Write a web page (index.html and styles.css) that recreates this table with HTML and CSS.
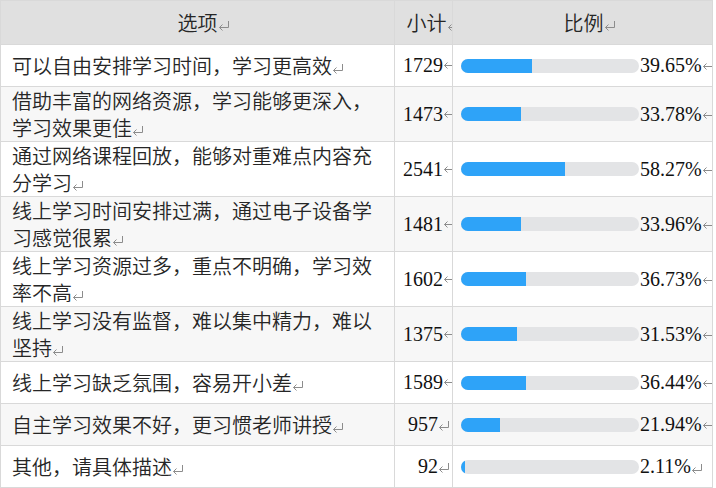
FILE: index.html
```html
<!DOCTYPE html>
<html lang="zh-CN">
<head>
<meta charset="utf-8">
<title>选项统计</title>
<link rel="stylesheet" href="styles.css">
</head>
<body>
<table class="survey">
  <colgroup><col class="c-opt"><col class="c-cnt"><col class="c-pct"></colgroup>
  <thead>
    <tr class="head">
      <th class="h-opt">选项<svg class="pm hang" viewBox="0 0 12 10"><path d="M10.5 0V6.5H1.5M4.5 3.5L1.5 6.5L4.5 9.5"/></svg></th>
      <th class="h-cnt">小计<svg class="pm hang" viewBox="0 0 12 10"><path d="M10.5 0V6.5H1.5M4.5 3.5L1.5 6.5L4.5 9.5"/></svg></th>
      <th class="h-pct">比例<svg class="pm hang" viewBox="0 0 12 10"><path d="M10.5 0V6.5H1.5M4.5 3.5L1.5 6.5L4.5 9.5"/></svg></th>
    </tr>
  </thead>
  <tbody>
    <tr class="row">
      <td class="opt">可以自由安排学习时间，学习更高效<svg class="pm" viewBox="0 0 12 10"><path d="M10.5 0V6.5H1.5M4.5 3.5L1.5 6.5L4.5 9.5"/></svg></td>
      <td class="cnt">1729<svg class="pm hi" viewBox="0 0 12 10"><path d="M10.5 0V6.5H1.5M4.5 3.5L1.5 6.5L4.5 9.5"/></svg></td>
      <td class="pct"><div class="pct-in"><div class="track"><div class="fill" style="width:39.65%"></div></div><span class="val">39.65%</span><svg class="pm hi" viewBox="0 0 12 10"><path d="M10.5 0V6.5H1.5M4.5 3.5L1.5 6.5L4.5 9.5"/></svg></div></td>
    </tr>
    <tr class="row alt">
      <td class="opt">借助丰富的网络资源，学习能够更深入，学习效果更佳<svg class="pm" viewBox="0 0 12 10"><path d="M10.5 0V6.5H1.5M4.5 3.5L1.5 6.5L4.5 9.5"/></svg></td>
      <td class="cnt">1473<svg class="pm hi" viewBox="0 0 12 10"><path d="M10.5 0V6.5H1.5M4.5 3.5L1.5 6.5L4.5 9.5"/></svg></td>
      <td class="pct"><div class="pct-in"><div class="track"><div class="fill" style="width:33.78%"></div></div><span class="val">33.78%</span><svg class="pm hi" viewBox="0 0 12 10"><path d="M10.5 0V6.5H1.5M4.5 3.5L1.5 6.5L4.5 9.5"/></svg></div></td>
    </tr>
    <tr class="row">
      <td class="opt">通过网络课程回放，能够对重难点内容充分学习<svg class="pm" viewBox="0 0 12 10"><path d="M10.5 0V6.5H1.5M4.5 3.5L1.5 6.5L4.5 9.5"/></svg></td>
      <td class="cnt">2541<svg class="pm hi" viewBox="0 0 12 10"><path d="M10.5 0V6.5H1.5M4.5 3.5L1.5 6.5L4.5 9.5"/></svg></td>
      <td class="pct"><div class="pct-in"><div class="track"><div class="fill" style="width:58.27%"></div></div><span class="val">58.27%</span><svg class="pm hi" viewBox="0 0 12 10"><path d="M10.5 0V6.5H1.5M4.5 3.5L1.5 6.5L4.5 9.5"/></svg></div></td>
    </tr>
    <tr class="row alt">
      <td class="opt">线上学习时间安排过满，通过电子设备学习感觉很累<svg class="pm" viewBox="0 0 12 10"><path d="M10.5 0V6.5H1.5M4.5 3.5L1.5 6.5L4.5 9.5"/></svg></td>
      <td class="cnt">1481<svg class="pm hi" viewBox="0 0 12 10"><path d="M10.5 0V6.5H1.5M4.5 3.5L1.5 6.5L4.5 9.5"/></svg></td>
      <td class="pct"><div class="pct-in"><div class="track"><div class="fill" style="width:33.96%"></div></div><span class="val">33.96%</span><svg class="pm hi" viewBox="0 0 12 10"><path d="M10.5 0V6.5H1.5M4.5 3.5L1.5 6.5L4.5 9.5"/></svg></div></td>
    </tr>
    <tr class="row">
      <td class="opt">线上学习资源过多，重点不明确，学习效率不高<svg class="pm" viewBox="0 0 12 10"><path d="M10.5 0V6.5H1.5M4.5 3.5L1.5 6.5L4.5 9.5"/></svg></td>
      <td class="cnt">1602<svg class="pm hi" viewBox="0 0 12 10"><path d="M10.5 0V6.5H1.5M4.5 3.5L1.5 6.5L4.5 9.5"/></svg></td>
      <td class="pct"><div class="pct-in"><div class="track"><div class="fill" style="width:36.73%"></div></div><span class="val">36.73%</span><svg class="pm hi" viewBox="0 0 12 10"><path d="M10.5 0V6.5H1.5M4.5 3.5L1.5 6.5L4.5 9.5"/></svg></div></td>
    </tr>
    <tr class="row alt">
      <td class="opt">线上学习没有监督，难以集中精力，难以坚持<svg class="pm" viewBox="0 0 12 10"><path d="M10.5 0V6.5H1.5M4.5 3.5L1.5 6.5L4.5 9.5"/></svg></td>
      <td class="cnt">1375<svg class="pm hi" viewBox="0 0 12 10"><path d="M10.5 0V6.5H1.5M4.5 3.5L1.5 6.5L4.5 9.5"/></svg></td>
      <td class="pct"><div class="pct-in"><div class="track"><div class="fill" style="width:31.53%"></div></div><span class="val">31.53%</span><svg class="pm hi" viewBox="0 0 12 10"><path d="M10.5 0V6.5H1.5M4.5 3.5L1.5 6.5L4.5 9.5"/></svg></div></td>
    </tr>
    <tr class="row">
      <td class="opt">线上学习缺乏氛围，容易开小差<svg class="pm" viewBox="0 0 12 10"><path d="M10.5 0V6.5H1.5M4.5 3.5L1.5 6.5L4.5 9.5"/></svg></td>
      <td class="cnt">1589<svg class="pm hi" viewBox="0 0 12 10"><path d="M10.5 0V6.5H1.5M4.5 3.5L1.5 6.5L4.5 9.5"/></svg></td>
      <td class="pct"><div class="pct-in"><div class="track"><div class="fill" style="width:36.44%"></div></div><span class="val">36.44%</span><svg class="pm hi" viewBox="0 0 12 10"><path d="M10.5 0V6.5H1.5M4.5 3.5L1.5 6.5L4.5 9.5"/></svg></div></td>
    </tr>
    <tr class="row alt">
      <td class="opt">自主学习效果不好，更习惯老师讲授<svg class="pm" viewBox="0 0 12 10"><path d="M10.5 0V6.5H1.5M4.5 3.5L1.5 6.5L4.5 9.5"/></svg></td>
      <td class="cnt">957<svg class="pm" viewBox="0 0 12 10"><path d="M10.5 0V6.5H1.5M4.5 3.5L1.5 6.5L4.5 9.5"/></svg></td>
      <td class="pct"><div class="pct-in"><div class="track"><div class="fill" style="width:21.94%"></div></div><span class="val">21.94%</span><svg class="pm hi" viewBox="0 0 12 10"><path d="M10.5 0V6.5H1.5M4.5 3.5L1.5 6.5L4.5 9.5"/></svg></div></td>
    </tr>
    <tr class="row">
      <td class="opt">其他，请具体描述<svg class="pm" viewBox="0 0 12 10"><path d="M10.5 0V6.5H1.5M4.5 3.5L1.5 6.5L4.5 9.5"/></svg></td>
      <td class="cnt">92<svg class="pm" viewBox="0 0 12 10"><path d="M10.5 0V6.5H1.5M4.5 3.5L1.5 6.5L4.5 9.5"/></svg></td>
      <td class="pct"><div class="pct-in"><div class="track"><div class="fill" style="width:2.11%"></div></div><span class="val">2.11%</span><svg class="pm" viewBox="0 0 12 10"><path d="M10.5 0V6.5H1.5M4.5 3.5L1.5 6.5L4.5 9.5"/></svg></div></td>
    </tr>
  </tbody>
</table>
</body>
</html>
```

FILE: styles.css
```css
html, body {
  margin: 0;
  padding: 0;
  background: #ffffff;
}

body {
  font-family: "Noto Sans CJK SC", "Noto Sans", sans-serif;
  color: #262626;
}

.survey {
  width: 712px;
  table-layout: fixed;
  border-collapse: collapse;
  font-size: 20px;
  line-height: 27px;
  font-weight: 350;
}

.c-opt { width: 394px; }
.c-cnt { width: 58px; }
.c-pct { width: 260px; }

.survey th,
.survey td {
  border: 1px solid #d9d9d9;
  vertical-align: middle;
  overflow: hidden;
}

.head {
  height: 44px;
  background: #e0e0e0;
}

.survey th {
  font-weight: 350;
  color: #262626;
  white-space: nowrap;
}

.survey .h-opt {
  text-align: center;
  padding: 0 11px;
}

.survey .h-cnt {
  text-align: center;
  padding: 0 2px 0 8px;
}

.survey .h-pct {
  text-align: center;
  padding: 0 6px 0 8px;
}

.row {
  height: 42px;
  background: #ffffff;
}

.row.alt {
  background: #f7f7f7;
}

.survey .opt {
  padding: 0 11px;
}

.survey .cnt {
  font-family: "Liberation Serif", "Times New Roman", serif;
  font-weight: normal;
  text-align: right;
  white-space: nowrap;
  padding: 0 2px 0 8px;
  color: #111111;
}

.survey .pct {
  padding: 0 0 0 8px;
}

.pct-in {
  display: flex;
  align-items: center;
  white-space: nowrap;
}

.track {
  flex: none;
  width: 178px;
  height: 14px;
  border-radius: 7px;
  background: #e3e4e6;
  overflow: hidden;
}

.fill {
  height: 100%;
  background: #2ea3f8;
}

.val {
  flex: none;
  margin-left: 1px;
  font-family: "Liberation Serif", "Times New Roman", serif;
  font-weight: normal;
  color: #111111;
}

.pm {
  display: inline-block;
  width: 12px;
  height: 10px;
  vertical-align: 0;
  fill: none;
  stroke: #8c8c8c;
  stroke-width: 1;
  flex: none;
}

.pm.hi {
  vertical-align: 3px;
}

.pct-in .pm {
  align-self: center;
  margin-top: 4px;
}

.pct-in .pm.hi {
  margin-top: -1px;
}

.pm.hang {
  margin-right: -12px;
}
```
